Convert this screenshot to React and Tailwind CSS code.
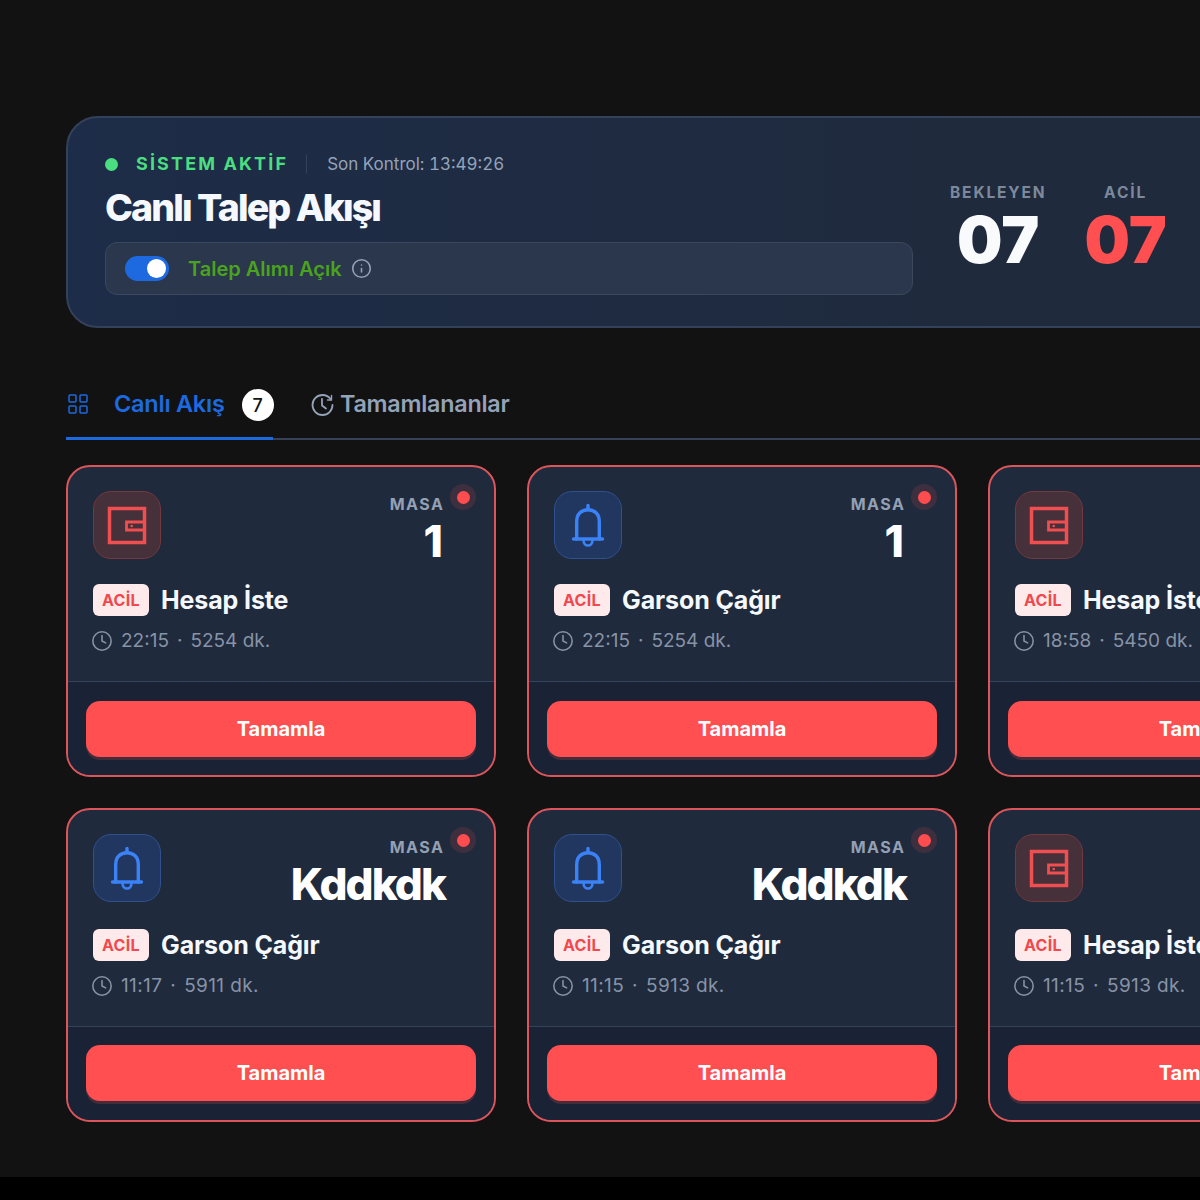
import { Clock, Info, LayoutGrid } from 'lucide-react';

const cards = [
  { type: 'wallet', table: '1', title: 'Hesap İste', time: '22:15', ago: '5254 dk.' },
  { type: 'bell', table: '1', title: 'Garson Çağır', time: '22:15', ago: '5254 dk.' },
  { type: 'wallet', table: '1', title: 'Hesap İste', time: '18:58', ago: '5450 dk.' },
  { type: 'bell', table: 'Kddkdk', title: 'Garson Çağır', time: '11:17', ago: '5911 dk.' },
  { type: 'bell', table: 'Kddkdk', title: 'Garson Çağır', time: '11:15', ago: '5913 dk.' },
  { type: 'wallet', table: 'Kddkdk', title: 'Hesap İste', time: '11:15', ago: '5913 dk.' },
];

function WalletIcon() {
  return (
    <svg width="40" height="40" viewBox="0 0 40 40" fill="none" stroke="#ef4f50" strokeWidth="3.5">
      <rect x="2.5" y="3.5" width="35" height="34" />
      <path d="M38 17H19.5v8H38" strokeWidth="2.8" />
      <circle cx="24.7" cy="21" r="1.3" fill="#ef4f50" stroke="none" />
    </svg>
  );
}

function BellIcon() {
  return (
    <svg width="36" height="44" viewBox="0 0 36 44" fill="none" stroke="#3b82f6" strokeWidth="3.4" strokeLinecap="round" strokeLinejoin="round">
      <path d="M3.5 36h29" />
      <path d="M6.7 36V18.5C6.7 11 11.5 6.7 18 6.7S29.3 11 29.3 18.5V36" />
      <path d="M18 2.5v4" />
      <path d="M13.5 37c0 3.5 2 5.5 4.5 5.5s4.5-2 4.5-5.5" strokeWidth="2.6" />
    </svg>
  );
}

function HistoryIcon() {
  return (
    <svg width="24" height="24" viewBox="0 0 24 24" fill="none" stroke="#94a3b8" strokeWidth="1.8" strokeLinecap="round" strokeLinejoin="round">
      <path d="M12.5 2A10 10 0 1 0 22.5 12" />
      <path d="M12.5 2c3.5 0 6.3 1.5 8.5 4.5" />
      <path d="M12 6v6.5l4 3" />
      <path d="M21.5 2.5V7h-4" strokeWidth="1.4" />
    </svg>
  );
}

function RequestCard({ card }) {
  const isBell = card.type === 'bell';
  const isLong = card.table.length > 1;
  return (
    <div className="relative flex flex-col rounded-[24px] border-2 border-[#dc555a] bg-[#1f2a3d] overflow-hidden">
      <span className="absolute right-[18px] top-[17px] flex h-[26px] w-[26px] items-center justify-center rounded-full bg-[#ef4f50]/15">
        <span className="h-[13px] w-[13px] rounded-full bg-[#ff4d4f]" />
      </span>
      <div className="px-[25px] pt-[24px] pb-[25px] border-b border-[#36425a]">
        <div className="flex justify-between">
          <div className={`flex h-[68px] w-[68px] items-center justify-center rounded-[18px] border ${isBell ? 'border-[#2f5190] bg-[#22375f]' : 'border-[#74393f] bg-[#463039]'}`}>
            {isBell ? <BellIcon /> : <WalletIcon />}
          </div>
          <div className="flex flex-col items-end pr-[26px]">
            <span className="h-[32px] pt-[3px] text-[16px] leading-[20px] font-bold tracking-[0.094em] text-[#94a0b3] mr-[-1.5px]">MASA</span>
            {isLong ? (
              <span className="pb-[2px] text-[44px] leading-[36px] font-extrabold tracking-[-0.045em] text-white mr-[-2px]">{card.table}</span>
            ) : (
              <span className="text-[44px] leading-[36px] font-extrabold text-white">{card.table}</span>
            )}
          </div>
        </div>
        <div className="mt-[25px] flex items-center gap-[12px]">
          <span className="flex h-[32px] w-[56px] items-center justify-center rounded-[6px] bg-[#ffeaeb] text-[16px] font-bold tracking-[0.02em] text-[#f0484c]">ACİL</span>
          <span className="text-[25px] leading-[32px] font-bold tracking-[-0.005em] text-[#f5f8fc]">{card.title}</span>
        </div>
        <div className={`mt-[10px] flex h-[30px] items-center text-[19px] text-[#8793a6] ${isLong ? 'tracking-[0.02em]' : ''}`}>
          <Clock size={22} strokeWidth={1.7} className="-ml-[2px] mr-[8px]" />
          <span>{card.time}</span>
          <span className="mx-[8px]">·</span>
          <span>{card.ago}</span>
        </div>
      </div>
      <div className={`flex-1 bg-[#1a2335] px-[18px] ${isLong ? 'pt-[18px] pb-[19px]' : 'pt-[19px] pb-[18px]'}`}>
        <button className="flex h-[56px] w-full items-center justify-center rounded-[14px] bg-[#ff4f50] text-[20px] font-bold text-white shadow-[0_3px_0_rgba(239,79,80,0.2)]">Tamamla</button>
      </div>
    </div>
  );
}

export default function App() {
  return (
    <div className="h-[1200px] overflow-hidden bg-black font-['Inter',sans-serif]">
      <div className="h-[1177px] overflow-hidden bg-[#121212] pl-[66px] pt-[116px]">
        <div className="w-[1352px]">
          {/* Header */}
          <div className="flex h-[212px] items-center gap-[37px] rounded-[32px] border-2 border-[#33415a] bg-gradient-to-r from-[#1d2c48] to-[#1f2a3c] to-70% pl-[37px]">
            <div className="w-[808px] pt-[1px]">
              <div className="flex items-center">
                <span className="h-[13px] w-[13px] rounded-full bg-[#4ade80]" />
                <span className="ml-[18px] text-[18px] leading-[26px] font-bold tracking-[0.118em] text-[#4ade80]">SİSTEM AKTİF</span>
                <span className="ml-[18px] h-[18px] w-px bg-[#36425a]" />
                <span className="ml-[20px] text-[17px] leading-[28px] tabular-nums text-[#94a3b8]">Son Kontrol: 13:49:26</span>
              </div>
              <h1 className="mt-[8px] text-[37.5px] leading-[44px] font-extrabold tracking-[-0.05em] text-[#f5f8fc]">Canlı Talep Akışı</h1>
              <div className="mt-[12px] flex h-[53px] items-center rounded-[12px] border border-[#3a475d] bg-[#2a374c] pl-[19px]">
                <span className="flex h-[25px] w-[44px] items-center justify-end rounded-full bg-[#1d6ae0] pr-[3px]">
                  <span className="h-[19px] w-[19px] rounded-full bg-white" />
                </span>
                <span className="ml-[19px] text-[20px] font-semibold text-[#4aa31e]">Talep Alımı Açık</span>
                <Info size={21} strokeWidth={1.8} className="ml-[9px] text-[#94a3b8]" />
              </div>
            </div>
            <div className="flex gap-[38px] pt-[15px]">
              <div className="flex flex-col items-center">
                <span className="text-[15.5px] leading-[20px] font-bold tracking-[0.12em] text-[#7c899c]">BEKLEYEN</span>
                <span className="mt-[1px] text-[64px] leading-[72px] font-black text-[#f8fafc]">07</span>
              </div>
              <div className="flex flex-col items-center">
                <span className="text-[15.5px] leading-[20px] font-bold tracking-[0.12em] text-[#7c899c]">ACİL</span>
                <span className="mt-[1px] text-[64px] leading-[72px] font-black text-[#ff4f50]">07</span>
              </div>
            </div>
          </div>

          {/* Tabs */}
          <div className="mt-[50px] flex h-[62px] items-center border-b-2 border-[#36425a]">
            <div className="-mb-[2px] flex h-[62px] w-[207px] shrink-0 items-center border-b-[3px] border-[#1d6ae0] pb-[7px]">
              <LayoutGrid size={24} strokeWidth={1.5} className="shrink-0 text-[#1d6ae0]" />
              <span className="ml-[24px] whitespace-nowrap text-[23.5px] font-semibold tracking-[-0.01em] text-[#1d6ae0]">Canlı Akış</span>
              <span className="ml-[17px] mt-[2px] flex h-[32px] w-[32px] shrink-0 items-center justify-center rounded-full bg-white text-[18px] font-medium text-[#121212]">7</span>
            </div>
            <div className="ml-[37px] flex items-center gap-[6px] pb-[7px]">
              <HistoryIcon />
              <span className="text-[23.3px] font-semibold tracking-[-0.01em] text-[#94a3b8]">Tamamlananlar</span>
            </div>
          </div>

          {/* Cards */}
          <div className="mt-[25px] grid grid-cols-[430px_430px_430px] gap-x-[31px] gap-y-[31px]">
            {cards.map((card, i) => (
              <RequestCard key={i} card={card} />
            ))}
          </div>
        </div>
      </div>
    </div>
  );
}
